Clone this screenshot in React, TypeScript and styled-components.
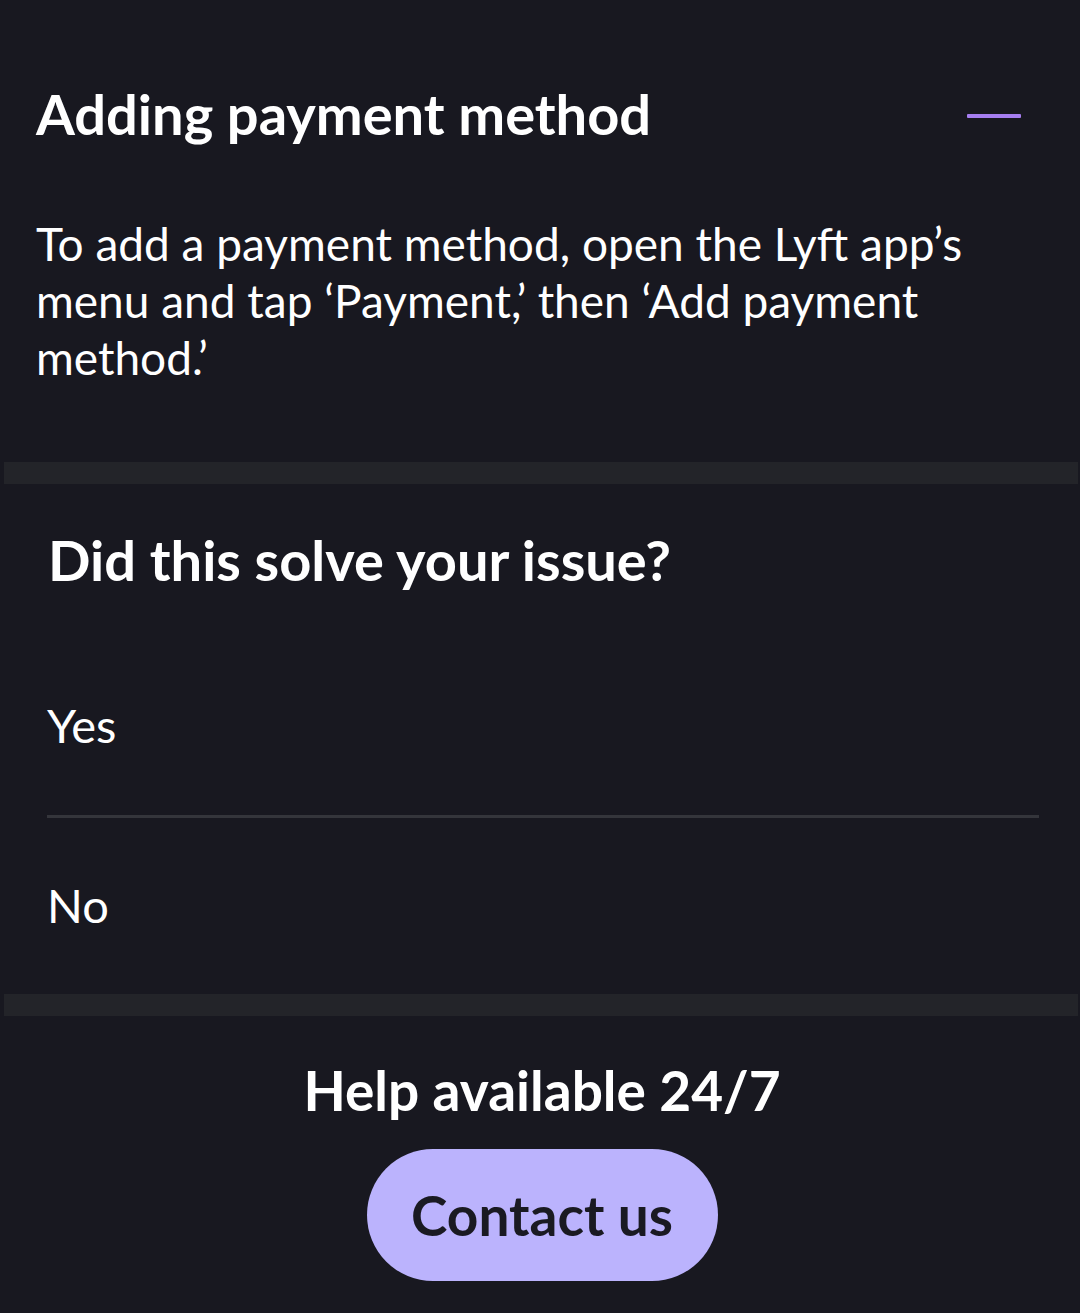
import React from "react";
import styled, { createGlobalStyle } from "styled-components";

const Global = createGlobalStyle`
  html, body { margin: 0; padding: 0; background: #181820; }
  body { font-family: Lato, "Noto Sans", sans-serif; color: #ffffff; }
`;

const Page = styled.div`
  width: 1080px;
  height: 1313px;
  background: #181820;
  display: flex;
  flex-direction: column;
  overflow: hidden;
`;

const Section = styled.section`
  padding: 0 36px;
`;

const HeaderRow = styled.div`
  display: flex;
  align-items: center;
  justify-content: space-between;
  padding-top: 83px;
  height: 62px;
`;

const Title = styled.h1`
  margin: 0;
  font-size: 56px;
  font-weight: 700;
  line-height: 62px;
  color: #fff;
`;

const Minus = styled.span`
  display: block;
  width: 54px;
  height: 4px;
  background: #a67ef0;
  margin: 4px 23px 0 0;
  border-radius: 1px;
`;

const Body = styled.p`
  margin: 70px 0 0;
  font-size: 46px;
  line-height: 57px;
  font-weight: 400;
  color: #fff;
`;

const Band = styled.div<{ $top: number }>`
  margin: ${(p) => p.$top}px 2px 0 4px;
  height: 22px;
  background: #232429;
  flex-shrink: 0;
`;

const Question = styled.h2`
  margin: 46px 0 0;
  padding: 0 48px;
  font-size: 56px;
  font-weight: 700;
  color: #fff;
  line-height: 60px;
`;

const Options = styled.div`
  margin: 110px 41px 0 47px;
  display: flex;
  flex-direction: column;
`;

const Option = styled.div<{ $divider?: boolean; $pt: number; $pb: number }>`
  padding: ${(p) => p.$pt}px 0 ${(p) => p.$pb}px;
  font-size: 47px;
  line-height: 50px;
  color: #fff;
  border-bottom: ${(p) => (p.$divider ? "3px solid #34353b" : "none")};
`;

const Footer = styled.div`
  display: flex;
  flex-direction: column;
  align-items: center;
  padding: 44px 0 0 4px;
`;

const HelpText = styled.div`
  font-size: 55px;
  font-weight: 700;
  line-height: 60px;
  color: #fff;
`;

const ContactButton = styled.button`
  margin-top: 29px;
  width: 351px;
  height: 132px;
  border-radius: 66px;
  border: none;
  background: #bbb3fd;
  color: #1a1a22;
  font-family: Lato, "Noto Sans", sans-serif;
  font-size: 55px;
  font-weight: 700;
  cursor: pointer;
`;

export default function App() {
  return (
    <>
      <Global />
      <Page>
        <Section>
          <HeaderRow>
            <Title>Adding payment method</Title>
            <Minus />
          </HeaderRow>
          <Body>
            To add a payment method, open the Lyft app’s menu and tap ‘Payment,’ then ‘Add payment method.’
          </Body>
        </Section>
        <Band $top={76} />
        <Question>Did this solve your issue?</Question>
        <Options>
          <Option $divider $pt={0} $pb={65}>Yes</Option>
          <Option $pt={62} $pb={64}>No</Option>
        </Options>
        <Band $top={0} />
        <Footer>
          <HelpText>Help available 24/7</HelpText>
          <ContactButton>Contact us</ContactButton>
        </Footer>
      </Page>
    </>
  );
}
